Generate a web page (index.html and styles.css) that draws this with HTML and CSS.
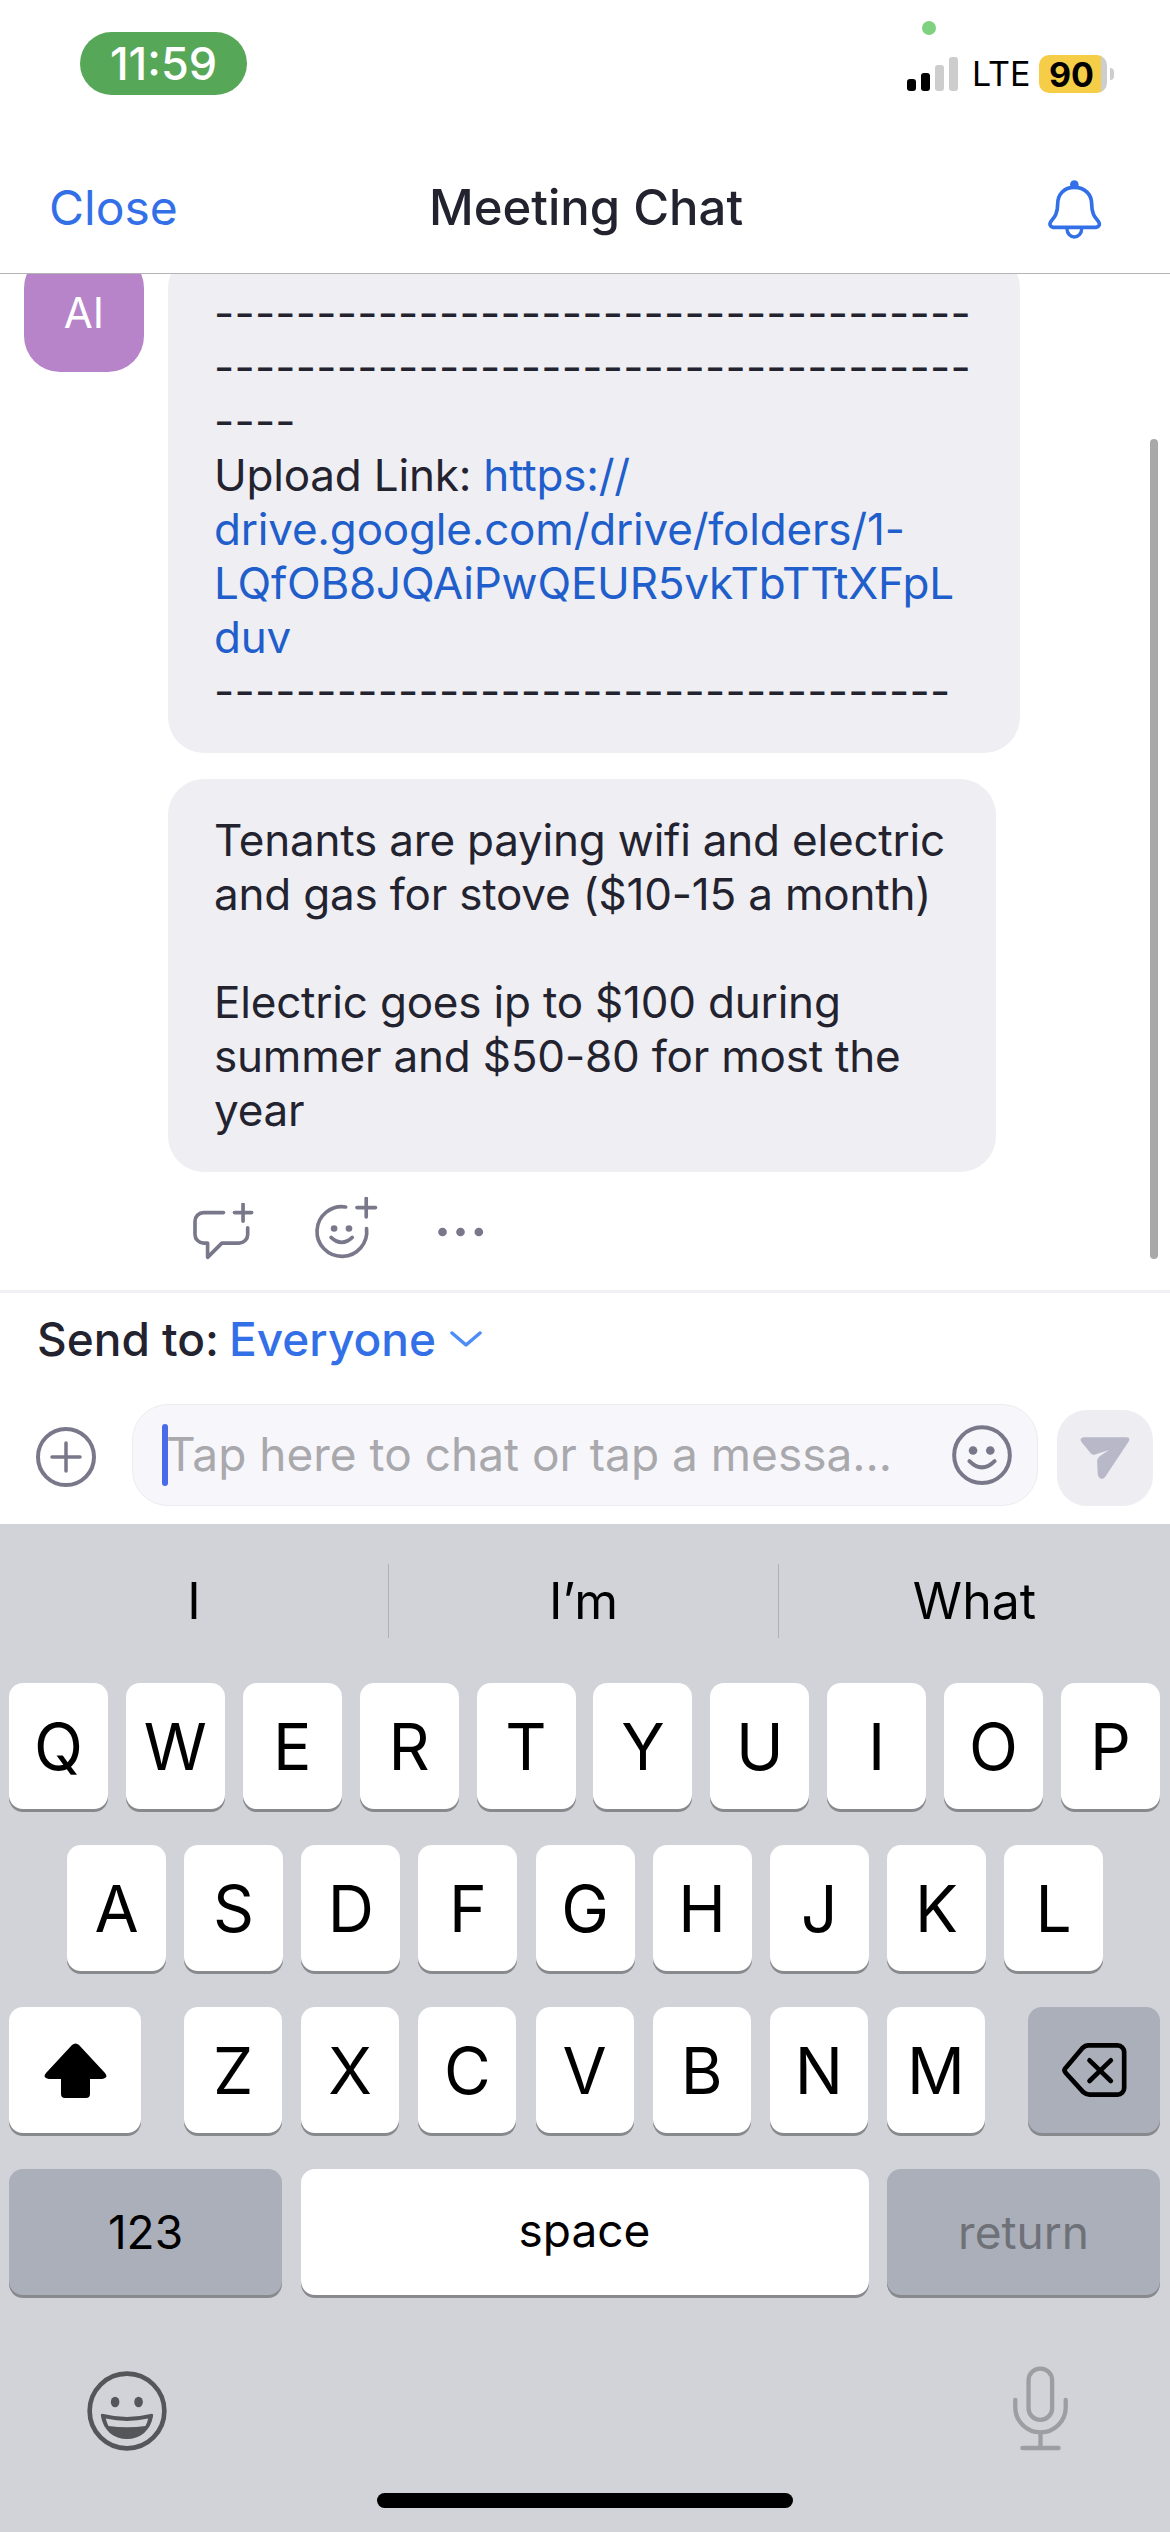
FILE: index.html
```html
<!DOCTYPE html>
<html lang="en">
<head>
    <meta charset="UTF-8">
    <meta name="viewport" content="width=device-width, initial-scale=1.0">
    <title>Meeting Chat</title>
    <link rel="stylesheet" href="styles.css">
</head>
<body>
<div class="screen">
    <!-- Status bar -->
    <div class="status">
        <div class="time">11:59</div>
        <div class="status-right">
            <div class="green-dot"></div>
            <div class="status-row">
                <div class="signal">
                    <span class="bar bar1"></span>
                    <span class="bar bar2"></span>
                    <span class="bar bar3"></span>
                    <span class="bar bar4"></span>
                </div>
                <span class="lte">LTE</span>
                <div class="battery"><span class="battery-num">90</span></div>
                <div class="battery-nub"></div>
            </div>
        </div>
    </div>

    <!-- Nav -->
    <div class="nav">
        <span class="close">Close</span>
        <span class="title">Meeting Chat</span>
        <svg class="bell" viewBox="140 58 165 180" fill="none" stroke="#3370e8" stroke-width="11" stroke-linejoin="round">
            <path d="M222 80C190 80 172 102 172 130C172 160 162 170 152 182Q143 195 158 200H288Q303 195 294 182C284 170 274 160 274 130C274 102 254 80 222 80z"/>
            <circle cx="222" cy="72" r="13" fill="#3370e8" stroke="none"/>
            <path d="M200 205a22 24 0 0 0 44 0" stroke-width="10"/>
        </svg>
    </div>

    <!-- Chat -->
    <div class="chat">
        <div class="message">
            <div class="avatar">AI</div>
            <div class="bubbles">
                <div class="bubble bubble-link">
                    <span class="dashes">-------------------------------------</span><br>
                    <span class="dashes">-------------------------------------</span><br>
                    <span class="dashes">----</span><br>
                    Upload Link: <a class="link">https://<br>drive.google.com/drive/folders/1-<br>LQfOB8JQAiPwQEUR5vkTbTTtXFpL<br>duv</a><br>
                    <span class="dashes">------------------------------------</span>
                </div>
                <div class="bubble bubble-text">
                    Tenants are paying wifi and electric<br>
                    and gas for stove ($10-15 a month)<br>
                    <br>
                    Electric goes ip to $100 during<br>
                    summer and $50-80 for most the<br>
                    year
                </div>
                <div class="actions">
                    <svg class="act-comment" viewBox="100 70 184 172" fill="none" stroke="#79788a" stroke-width="11" stroke-linecap="round" stroke-linejoin="round">
                        <path d="M192 99H132a26 26 0 0 0-26 26v40a26 26 0 0 0 26 26h12v43l43-43h52a26 26 0 0 0 26-26v-20"/>
                        <path d="M251 73v52M225 99h52"/>
                    </svg>
                    <svg class="act-smile" viewBox="460 50 195 190" fill="none" stroke="#79788a" stroke-width="11" stroke-linecap="round">
                        <path d="M558 80A75 75 0 1 0 621 145"/>
                        <path d="M620 54v56M592 82h56"/>
                        <path d="M514 172q32 30 64 0"/>
                        <circle cx="523" cy="145" r="10" fill="#79788a" stroke="none"/>
                        <circle cx="568" cy="145" r="10" fill="#79788a" stroke="none"/>
                    </svg>
                    <svg class="act-dots" viewBox="835 140 140 30" fill="#79788a">
                        <circle cx="851" cy="155" r="13"/>
                        <circle cx="905" cy="155" r="13"/>
                        <circle cx="960" cy="155" r="13"/>
                    </svg>
                </div>
            </div>
        </div>
        <div class="scrollbar"></div>
    </div>

    <!-- Composer -->
    <div class="composer">
        <div class="send-to">
            <span class="send-label">Send to:</span>
            <span class="send-target">Everyone</span>
            <svg class="chevron" viewBox="0 0 32 16" fill="none" stroke="#4d8df5" stroke-width="3.5" stroke-linecap="round" stroke-linejoin="round">
                <path d="M2 2l14 12L30 2"/>
            </svg>
        </div>
        <div class="input-row">
            <svg class="plus-icon" viewBox="0 0 60 60" fill="none" stroke="#79788a">
                <circle cx="30" cy="30" r="28" stroke-width="4"/>
                <path d="M30 16v28M16 30h28" stroke-width="3.5" stroke-linecap="round"/>
            </svg>
            <div class="input">
                <span class="caret"></span>
                <span class="placeholder">Tap here to chat or tap a messa...</span>
                <svg class="input-smile" viewBox="150 110 186 190" fill="none" stroke="#79788a" stroke-width="12" stroke-linecap="round">
                    <circle cx="243" cy="204" r="84"/>
                    <path d="M205 222q38 38 76 0"/>
                    <circle cx="216" cy="190" r="13" fill="#79788a" stroke="none"/>
                    <circle cx="268" cy="190" r="13" fill="#79788a" stroke="none"/>
                </svg>
            </div>
            <div class="send-btn">
                <svg class="send-icon" viewBox="535 143 150 127" fill="#b9b8c9">
                    <path d="M545 144H675q12 0 7 12L612 262q-8 12-18 5q-6-3-6-12L586 215q0-8 8-14L622 182L580 196q-6 2-12-2L540 160q-10-12 5-16z"/>
                </svg>
            </div>
        </div>
    </div>

    <!-- Keyboard -->
    <div class="keyboard">
        <div class="predict">
            <span class="word">I</span>
            <span class="sep"></span>
            <span class="word">I’m</span>
            <span class="sep"></span>
            <span class="word">What</span>
        </div>
        <div class="keys">
            <div class="key-row row-top">
                <div class="key">Q</div><div class="key">W</div><div class="key">E</div><div class="key">R</div><div class="key">T</div>
                <div class="key">Y</div><div class="key">U</div><div class="key">I</div><div class="key">O</div><div class="key">P</div>
            </div>
            <div class="key-row row-mid">
                <div class="key">A</div><div class="key">S</div><div class="key">D</div><div class="key">F</div><div class="key">G</div>
                <div class="key">H</div><div class="key">J</div><div class="key">K</div><div class="key">L</div>
            </div>
            <div class="key-row row-low">
                <div class="key key-wide">
                    <svg class="shift" viewBox="0 0 63 55" fill="#000">
                        <path d="M28 2Q31.5-1 35 2L61 30q4 5-3 6H46V51q0 4-4 4H21q-4 0-4-4V36H5q-7-1-3-6z"/>
                    </svg>
                </div>
                <div class="low-letters">
                    <div class="key">Z</div><div class="key">X</div><div class="key">C</div><div class="key">V</div>
                    <div class="key">B</div><div class="key">N</div><div class="key">M</div>
                </div>
                <div class="key key-wide key-dark">
                    <svg class="delete" viewBox="186 68 194 162" fill="none" stroke="#000" stroke-width="14" stroke-linecap="round" stroke-linejoin="round">
                        <path d="M265 75H352a20 20 0 0 1 20 20V203a20 20 0 0 1-20 20H268q-10 0-18-7L197 158q-8-8 0-16L247 83q8-8 18-8z"/>
                        <path d="M268 120L332 182M332 120L268 182"/>
                    </svg>
                </div>
            </div>
            <div class="key-row row-bottom">
                <div class="key key-dark key-small">123</div>
                <div class="key key-small key-space">space</div>
                <div class="key key-dark key-small key-return">return</div>
            </div>
        </div>
        <div class="kb-tools">
            <svg class="kb-emoji" viewBox="80 64 242 242" fill="none" stroke="#54565a" stroke-width="14">
                <circle cx="201" cy="185" r="113"/>
                <ellipse cx="165" cy="158" rx="13" ry="16" fill="#54565a" stroke="none"/>
                <ellipse cx="236" cy="158" rx="13" ry="16" fill="#54565a" stroke="none"/>
                <path d="M122 200q-2-8 8-6q71 18 142 0q10-2 8 6C272 245 240 270 201 270S130 245 122 200z" fill="#54565a" stroke="none"/>
                <path d="M137 208q64 14 128 0q-2 12-8 22q-56 8-112 0q-6-10-8-22z" fill="#d1d3d9" stroke="none"/>
            </svg>
            <svg class="kb-mic" viewBox="100 48 170 256" fill="none" stroke="#9d9ea2" stroke-width="13" stroke-linecap="round">
                <rect x="149" y="56" width="71" height="154" rx="35"/>
                <path d="M109 150V172a76 76 0 0 0 152 0V150"/>
                <path d="M185 250V290"/>
                <path d="M131 295H239" stroke-width="14"/>
            </svg>
        </div>
        <div class="home-bar"></div>
    </div>
</div>
</body>
</html>
```

FILE: styles.css
```css
* {
    box-sizing: border-box;
}
html, body {
    margin: 0;
    padding: 0;
}
body {
    font-family: Inter, "Liberation Sans", sans-serif;
    background: #fff;
    color: #23232f;
}
.screen {
    width: 1170px;
    height: 2532px;
    display: flex;
    flex-direction: column;
    overflow: hidden;
}

/* status bar */
.status {
    height: 146px;
    flex: none;
    display: flex;
    justify-content: space-between;
    align-items: flex-start;
    padding: 32px 55px 0 80px;
}
.time {
    width: 167px;
    height: 63px;
    border-radius: 32px;
    background: #57a758;
    color: #fff;
    font-size: 45px;
    font-weight: 500;
    display: flex;
    align-items: center;
    justify-content: center;
}
.status-right {
    margin-top: -11px;
    width: 208px;
}
.green-dot {
    width: 14px;
    height: 14px;
    margin-left: 15px;
    border-radius: 50%;
    background: #7dd17f;
}
.status-row {
    margin-top: 20px;
    height: 38px;
    display: flex;
    align-items: flex-end;
}
.signal {
    width: 51px;
    height: 34px;
    margin-bottom: 2px;
    display: flex;
    align-items: flex-end;
    justify-content: space-between;
}
.bar {
    width: 9px;
    border-radius: 3px;
    background: #cdcdcd;
}
.bar1 {
    height: 12px;
    background: #000;
}
.bar2 {
    height: 18px;
    background: #000;
}
.bar3 {
    height: 26px;
}
.bar4 {
    height: 34px;
}
.lte {
    margin-left: 14px;
    font-size: 34px;
    line-height: 38px;
    color: #000;
    width: 67px;
}
.battery {
    width: 68px;
    height: 38px;
    border-radius: 10px;
    background: linear-gradient(to right, #f5cd47 62px, #cdcdcd 62px);
    color: #000;
    display: flex;
    align-items: center;
    padding-left: 10px;
}
.battery-num {
    font-size: 34px;
    font-weight: 700;
}
.battery-nub {
    width: 4px;
    height: 12px;
    margin: 0 0 13px 3px;
    border-radius: 0 6px 6px 0;
    background: #cdcdcd;
}

/* nav */
.nav {
    height: 128px;
    flex: none;
    display: grid;
    grid-template-columns: 1fr auto 1fr;
    align-items: center;
    padding: 0 68px 0 49px;
    border-bottom: 1px solid #b4b4b6;
}
.close {
    color: #3370e8;
    font-size: 48px;
    margin-bottom: 4px;
}
.title {
    font-size: 49px;
    font-weight: 500;
    margin: 0 0 4px 21px;
}
.bell {
    width: 55px;
    height: 60px;
    justify-self: end;
}

/* chat */
.chat {
    position: relative;
    height: 1019px;
    flex: none;
    overflow: hidden;
    display: flex;
    flex-direction: column;
    justify-content: flex-end;
    border-bottom: 3px solid #f0f0f5;
}
.message {
    display: flex;
    align-items: flex-start;
    padding: 0 0 30px 24px;
}
.avatar {
    width: 120px;
    height: 120px;
    flex: none;
    border-radius: 36px;
    background: #b784c9;
    color: #fff;
    font-size: 42px;
    display: flex;
    align-items: center;
    justify-content: center;
}
.bubbles {
    margin-left: 24px;
    display: flex;
    flex-direction: column;
    align-items: flex-start;
}
.bubble {
    background: #eeeef3;
    border-radius: 36px;
    padding: 34px 46px 35px;
    font-size: 44px;
    line-height: 54px;
    letter-spacing: -0.2px;
    white-space: nowrap;
}
.bubble-link {
    width: 852px;
}
.bubble-text {
    width: 828px;
    margin-top: 26px;
}
.link {
    color: #1f5ecb;
}
.dashes {
    letter-spacing: 0.22px;
}
.actions {
    margin: 25px 0 0 25px;
    display: flex;
    align-items: flex-end;
    gap: 59px;
}
.act-comment {
    width: 61px;
    height: 57px;
}
.act-smile {
    width: 65px;
    height: 63px;
}
.act-dots {
    width: 47px;
    height: 10px;
    margin-bottom: 23px;
}
.scrollbar {
    position: absolute;
    top: 165px;
    right: 12px;
    width: 8px;
    height: 820px;
    border-radius: 4px;
    background: #a9a9a9;
}

/* composer */
.composer {
    height: 231px;
    flex: none;
}
.send-to {
    height: 111px;
    padding: 0 0 20px 37px;
    display: flex;
    align-items: center;
    font-size: 46px;
}
.send-label {
    font-weight: 500;
}
.send-target {
    margin-left: 10px;
    color: #3370e8;
    font-weight: 500;
}
.chevron {
    width: 32px;
    height: 16px;
    margin-left: 14px;
}
.input-row {
    display: flex;
    align-items: flex-end;
    padding-left: 36px;
}
.plus-icon {
    width: 60px;
    height: 60px;
    margin: 0 36px 19px 0;
}
.input {
    width: 906px;
    height: 102px;
    border: 1px solid #ececf0;
    border-radius: 36px;
    background: #f7f7fb;
    display: flex;
    align-items: center;
    padding-left: 29px;
}
.caret {
    width: 6px;
    height: 62px;
    border-radius: 3px;
    background: #4a6ae8;
}
.placeholder {
    width: 783px;
    margin-left: -2px;
    padding-bottom: 2px;
    color: #a9a9ad;
    font-size: 46px;
    white-space: nowrap;
}
.input-smile {
    width: 62px;
    height: 63px;
    margin-left: 2px;
}
.send-btn {
    width: 96px;
    height: 96px;
    margin-left: 19px;
    border-radius: 30px;
    background: #ededf2;
    display: flex;
    align-items: center;
    justify-content: center;
}
.send-icon {
    width: 50px;
    height: 42px;
}

/* keyboard */
.keyboard {
    flex: 1;
    background: #d1d3d9;
    position: relative;
}
.predict {
    height: 159px;
    padding-bottom: 6px;
    display: grid;
    grid-template-columns: 388px 1px 389px 1px 391px;
    align-items: center;
    font-size: 50px;
    color: #000;
    text-align: center;
}
.sep {
    height: 74px;
    background: #b0b1b6;
}
.keys {
    display: flex;
    flex-direction: column;
    gap: 36px;
}
.key-row {
    display: flex;
    justify-content: space-between;
    padding: 0 10px 0 9px;
}
.row-mid {
    padding: 0 67px;
}
.key {
    width: 99px;
    height: 126px;
    flex: none;
    border-radius: 14px;
    background: #fff;
    box-shadow: 0 3px 0 #88898d;
    color: #000;
    font-size: 64px;
    display: flex;
    align-items: center;
    justify-content: center;
}
.low-letters {
    display: flex;
    gap: 19.17px;
}
.low-letters .key {
    width: 98px;
}
.key-wide {
    width: 132px;
}
.key-dark {
    background: #abafba;
}
.key-small {
    font-size: 46px;
    width: 273px;
}
.key-space {
    width: 568px;
    padding-bottom: 5px;
}
.key-return {
    color: #6f7178;
}
.shift {
    width: 63px;
    height: 55px;
}
.delete {
    width: 65px;
    height: 54px;
}
.kb-tools {
    display: flex;
    justify-content: space-between;
    align-items: flex-end;
    padding: 0 101px 0 87px;
    margin-top: 69px;
    height: 87px;
}
.kb-emoji {
    width: 80px;
    height: 80px;
}
.kb-mic {
    width: 57px;
    height: 85px;
}
.home-bar {
    width: 416px;
    height: 15px;
    margin: 42px auto 0;
    border-radius: 8px;
    background: #000;
}
```
